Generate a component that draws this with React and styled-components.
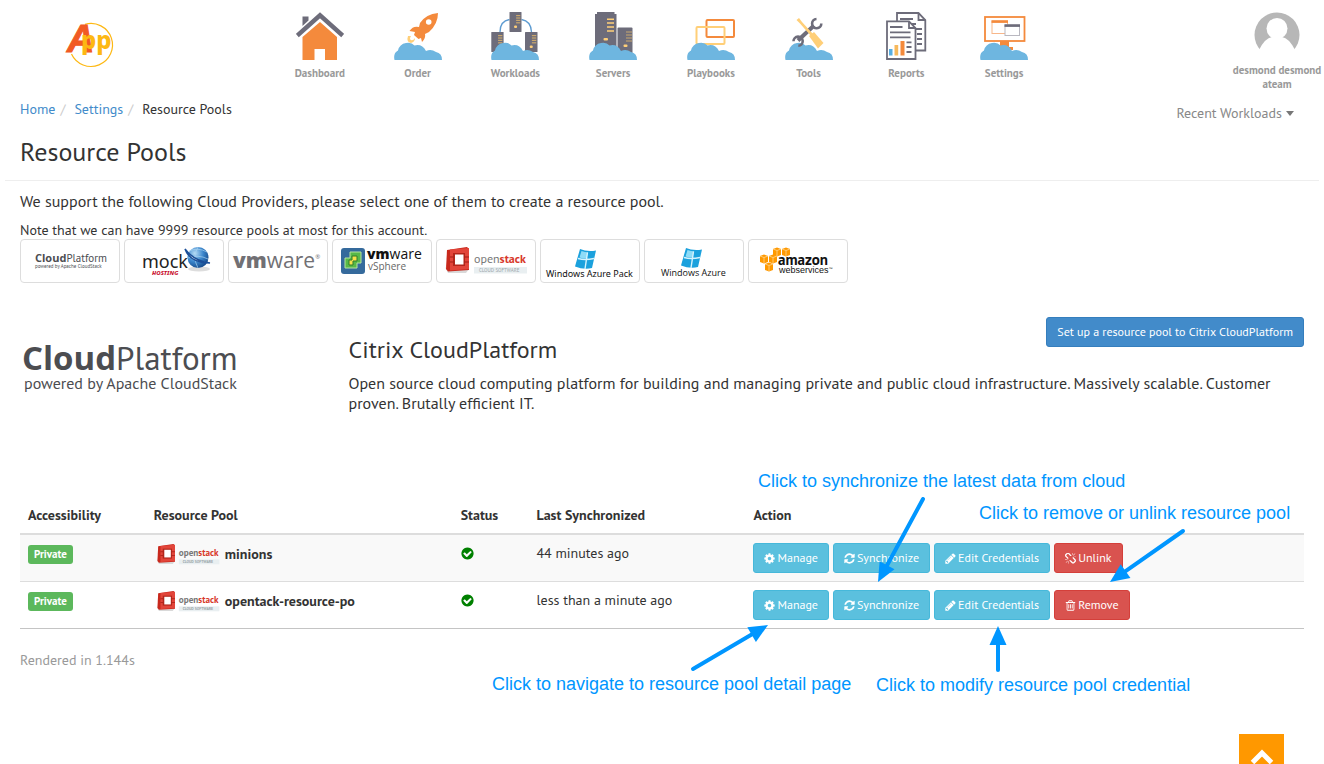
import React from "react";
import styled, { createGlobalStyle } from "styled-components";

const GlobalStyle = createGlobalStyle`
  * {
    box-sizing: border-box;
  }
  body {
    margin: 0;
    background: #ffffff;
    color: #333333;
    font-family: "PT Sans", "Noto Sans", sans-serif;
    font-size: 14px;
    line-height: 20px;
  }
`;

const GREY = "#6d6c7a";
const ORANGE = "#f48a3c";
const YELLOW = "#ffcf78";
const BLUE = "#6eb6e0";

const ICONS = {
  cog: "M1152 896q0-106-75-181t-181-75-181 75-75 181 75 181 181 75 181-75 75-181zm512-109v222q0 12-8 23t-20 13l-185 28q-19 54-39 91 35 50 107 138 10 12 10 25t-9 23q-27 37-99 108t-94 71q-12 0-26-9l-138-108q-44 23-91 38-16 136-29 186-7 28-36 28h-222q-14 0-24.5-8.5t-11.5-21.5l-28-184q-49-16-90-37l-141 107q-10 9-25 9-14 0-25-11-126-114-165-168-7-10-7-23 0-12 8-23 15-21 51-66.5t54-70.5q-27-50-41-99l-183-27q-13-2-21-12.5t-8-23.5v-222q0-12 8-23t19-13l186-28q14-46 39-92-40-57-107-138-10-12-10-24 0-10 9-23 26-36 98.5-107.5t94.5-71.5q13 0 26 10l138 107q44-23 91-38 16-136 29-186 7-28 36-28h222q14 0 24.5 8.5t11.5 21.5l28 184q49 16 90 37l142-107q9-9 24-9 13 0 25 10 129 119 165 170 7 8 7 22 0 12-8 23-15 21-51 66.5t-54 70.5q26 50 41 98l183 28q13 2 21 12.5t8 23.5z",
  refresh: "M1639 1056q0 5-1 7-64 268-268 434.5t-478 166.5q-146 0-282.5-55t-243.5-157l-129 129q-19 19-45 19t-45-19-19-45v-448q0-26 19-45t45-19h448q26 0 45 19t19 45-19 45l-137 137q71 66 161 102t187 36q134 0 250-65t186-179q11-17 53-117 8-23 30-23h192q13 0 22.5 9.5t9.5 22.5zm25-800v448q0 26-19 45t-45 19h-448q-26 0-45-19t-19-45 19-45l138-138q-148-137-349-137-134 0-250 65t-186 179q-11 17-53 117-8 23-30 23h-199q-13 0-22.5-9.5t-9.5-22.5v-7q65-268 270-434.5t480-166.5q146 0 284 55.5t245 156.5l130-129q19-19 45-19t45 19 19 45z",
  pencil: "M491 1536l91-91-235-235-91 91v107h128v128h107zm523-928q0-22-22-22-10 0-17 7l-542 542q-7 7-7 17 0 22 22 22 10 0 17-7l542-542q7-7 7-17zm-54-192l416 416-832 832h-416v-416zm683 96q0 53-37 90l-166 166-416-416 166-165q36-38 90-38 53 0 91 38l235 234q37 39 37 91z",
  trash: "M704 736v576q0 14-9 23t-23 9h-64q-14 0-23-9t-9-23v-576q0-14 9-23t23-9h64q14 0 23 9t9 23zm256 0v576q0 14-9 23t-23 9h-64q-14 0-23-9t-9-23v-576q0-14 9-23t23-9h64q14 0 23 9t9 23zm256 0v576q0 14-9 23t-23 9h-64q-14 0-23-9t-9-23v-576q0-14 9-23t23-9h64q14 0 23 9t9 23zm128 724v-948h-896v948q0 22 7 40.5t14.5 27 10.5 8.5h832q3 0 10.5-8.5t14.5-27 7-40.5zm-672-1076h448l-48-117q-7-9-17-11h-317q-10 2-17 11zm928 32v64q0 14-9 23t-23 9h-96v948q0 83-47 143.5t-113 60.5h-832q-66 0-113-58.5t-47-141.5v-952h-96q-14 0-23-9t-9-23v-64q0-14 9-23t23-9h309l70-167q15-37 54-63t79-26h320q40 0 79 26t54 63l70 167h309q14 0 23 9t9 23z",
  unlink: "M503 1271l-256 256q-10 9-23 9-12 0-23-9-9-10-9-23t9-23l256-256q10-9 23-9t23 9q9 10 9 23t-9 23zm169 41v320q0 14-9 23t-23 9-23-9-9-23v-320q0-14 9-23t23-9 23 9 9 23zm-224-224q0 14-9 23t-23 9h-320q-14 0-23-9t-9-23 9-23 23-9h320q14 0 23 9t9 23zm1264 128q0 120-85 203l-147 146q-83 83-203 83-121 0-204-85l-334-335q-21-21-42-56l239-18 273 274q28 28 68 27.5t68-27.5l147-146q28-28 28-67 0-40-28-68l-274-275 18-239q35 21 56 42l336 336q84 86 84 204zm-617-724l-239 18-273-274q-28-28-68-28-39 0-68 27l-147 146q-28 28-28 67 0 40 28 68l274 274-18 240q-35-21-56-42l-336-336q-84-86-84-204 0-120 85-203l147-146q83-83 203-83 121 0 204 85l334 335q21 21 42 56zm633 84q0 14-9 23t-23 9h-320q-14 0-23-9t-9-23 9-23 23-9h320q14 0 23 9t9 23zm-544-544v320q0 14-9 23t-23 9-23-9-9-23v-320q0-14 9-23t23-9 23 9 9 23zm407 151l-256 256q-11 9-23 9t-23-9q-9-10-9-23t9-23l256-256q10-9 23-9t23 9q9 10 9 23t-9 23z",
  check: "M1412 734q0-28-18-46l-91-90q-19-19-45-19t-45 19l-408 407-226-226q-19-19-45-19t-45 19l-91 90q-18 18-18 46 0 27 18 45l362 362q19 19 45 19 27 0 46-19l543-543q18-18 18-45zm252 162q0 209-103 385.5t-279.5 279.5-385.5 103-385.5-103-279.5-279.5-103-385.5 103-385.5 279.5-279.5 385.5-103 385.5 103 279.5 279.5 103 385.5z",
};

const Icon = ({ name, size = 11 }) => (
  <svg width={size} height={size} viewBox="80 80 1632 1632" fill="currentColor" aria-hidden="true">
    <path d={ICONS[name]} />
  </svg>
);

/* ---------- header drawings ---------- */

const Cloud = () => (
  <path d="M0.5 48Q-1 41 4 38.500Q5.500 32 12 31Q17.500 30 20.500 33.500Q28 31.500 32 39Q37 36.500 42 40Q48 41 48 48Z" fill={BLUE} />
);

const Server = ({ x, y, w, h, dots = true }) => (
  <g>
    <rect x={x} y={y} width={w} height={h} rx="0.5" fill={GREY} />
    {[0.15, 0.27, 0.39, 0.51].map((p) => (
      <rect key={p} x={x + w * 0.55} y={y + h * p} width={w * 0.35} height="1.2" fill="#c9a76e" />
    ))}
    {dots && <rect x={x + w * 0.38} y={y + h * 0.68} width="3" height="2.4" rx="1" fill={YELLOW} />}
  </g>
);

const DRAWINGS = {
  Dashboard: (
    <>
      <path d="M6.500 4.500h6v4l-6 5.500z" fill={GREY} />
      <path d="M1.300 23.500L24 3.300L46.700 23.500" fill="none" stroke={GREY} strokeWidth="4.400" />
      <path d="M24 10L41 25V48H29V37H18.500V48H6.500V25Z" fill={ORANGE} />
    </>
  ),
  Order: (
    <>
      <path d="M14 24Q12 30 17 31Q21 30 21 26Q19 29 17 28Q15 27 17 24Z" fill={YELLOW} />
      <path d="M44 1Q32 2 26 11L25 15Q19 13.500 15.500 19L21 20L20 23L24.500 27L27 26L28 30Q32 26 31 22L35 20Q44 12 44 1Z" fill={ORANGE} />
      <circle cx="34.700" cy="10" r="2.800" fill="#fff" />
      <Cloud />
    </>
  ),
  Workloads: (
    <>
      <path d="M9 20Q9 9 18.500 7.500M30.500 7.500Q40 9 40.500 20" fill="none" stroke="#5d9bd1" strokeWidth="1.300" />
      <Server x={18.5} y={0} w={12} h={20} />
      <Server x={0.3} y={20} w={12.3} h={20} dots={false} />
      <Server x={34} y={20} w={12.5} h={20} />
      <Cloud />
    </>
  ),
  Servers: (
    <>
      <path d="M8 0H25.500V2H27.500V44H6V2H8Z" fill={GREY} />
      <path d="M18 7.300h7M18 11h7M18 15h7M18 19h7" stroke={YELLOW} strokeWidth="1.600" />
      <rect x="14.500" y="26" width="4.500" height="2.600" rx="1" fill={YELLOW} />
      <rect x="28.500" y="15.500" width="15" height="26" rx="1" fill={GREY} />
      <path d="M37 20h6M37 23h6M37 26h6M37 29h6" stroke="#c9a76e" strokeWidth="1.200" />
      <rect x="34.500" y="32.500" width="4" height="2.400" rx="1" fill={YELLOW} />
      <Cloud />
    </>
  ),
  Playbooks: (
    <>
      <rect x="19.500" y="8" width="27.500" height="17" rx="1" fill="none" stroke={ORANGE} strokeWidth="2" />
      <rect x="9.500" y="15" width="28" height="17" rx="1" fill="none" stroke={YELLOW} strokeWidth="2" />
      <Cloud />
    </>
  ),
  Tools: (
    <>
      <Cloud />
      <path d="M13 28.500L29 13.500" stroke={GREY} strokeWidth="4" />
      <path d="M31.500 7A4.600 4.600 0 1 0 36.300 11.500" fill="none" stroke={GREY} strokeWidth="2.600" />
      <path d="M8.500 29.300A4.600 4.600 0 1 1 13.300 33.800" fill="none" stroke={GREY} strokeWidth="2.600" />
      <path d="M11.500 8L14 6L17 10L28 22L26 24L15 11.500Z" fill={YELLOW} />
      <path d="M24 24L29 20L38.500 31L33 36.500Z" fill={YELLOW} />
    </>
  ),
  Reports: (
    <>
      <path d="M15 1H36.500L43.300 8V38.500H15Z" fill="#fff" stroke={GREY} strokeWidth="1.800" />
      <path d="M36.500 1V8H43.300M18 7h13M18 12h16M32 17h8M35 22h5M35 27h5M35 32h5" fill="none" stroke={GREY} strokeWidth="1.800" />
      <path d="M5 9.300H27L33.500 16V47H5Z" fill="#fff" stroke={GREY} strokeWidth="1.800" />
      <path d="M27 9.300V16H33.500M8 15h12.500M8 20.300h20.500M8 25.300h20.500M24.500 30.300h5M24.500 35h5M24.500 40h5" fill="none" stroke={GREY} strokeWidth="1.800" />
      <rect x="7" y="37" width="3.500" height="6.500" fill="#58aee0" />
      <rect x="12.500" y="33" width="3.700" height="10.500" fill="#f7b95c" />
      <rect x="18.500" y="29" width="4" height="14.500" fill={ORANGE} />
    </>
  ),
  Settings: (
    <>
      <rect x="5" y="5" width="39.500" height="24" fill="#fff" stroke={ORANGE} strokeWidth="1.800" />
      <path d="M20 29h9v6h4v3H20z" fill={ORANGE} />
      <rect x="12" y="9" width="15.500" height="12.500" fill="#fff" stroke="#f8b78a" />
      <rect x="11.500" y="8.300" width="16.500" height="2.600" fill={ORANGE} />
      <rect x="25" y="13" width="14.500" height="10.500" fill="#fff" stroke="#b9b8c0" />
      <rect x="24.500" y="12.300" width="15.500" height="2.600" fill={GREY} />
      <Cloud />
    </>
  ),
};

const AppLogo = () => (
  <svg width="56" height="54" viewBox="62 17 56 54" role="img" aria-label="App">
    <path d="M85 24.300A21.500 21.500 0 1 1 71.500 54" fill="none" stroke="#fdb813" strokeWidth="1.200" />
    <g fontWeight="800">
      <text x="67" y="52" fontFamily="Liberation Sans, sans-serif" fontSize="38" fontStyle="italic" fill="#f15a24" stroke="#f15a24">A</text>
      <text x="81" y="49" fontFamily="Noto Sans, sans-serif" fontSize="24" fill="#fdb813">pp</text>
    </g>
  </svg>
);

const Avatar = () => (
  <svg width="46" height="46" viewBox="0 0 46 46" role="img" aria-label="User">
    <circle cx="23" cy="23" r="22.500" fill="#b7b7b7" />
    <circle cx="23" cy="16.500" r="10.500" fill="#fff" />
    <path d="M5 38Q11 26 18 25H28Q35 26 41 38L36 46H10Z" fill="#fff" />
  </svg>
);

/* ---------- provider logos ---------- */

const OpenstackArt = () => (
  <g>
    <path d="M9 28L13 32L33 30L30 34H12Z" fill="#d9d9d9" />
    <path d="M11 11L31 8L33 10V31L12 32.500L10 30Z" fill="#c8281c" />
    <path d="M14 10.500L33 9V30L14 31.500Z" fill="#e2453a" />
    <path d="M17 14H29V27H17Z" fill="#b3261b" />
    <path d="M19 15.500H27.500V25.500H19Z" fill="#fff" />
    <path d="M14 18h3.500M14 23h3.500M28.500 18H33M28.500 23H33" stroke="#a31f16" />
    <rect x="38" y="28" width="53" height="6.500" fill="#e9eff1" />
    <g fontFamily="PT Sans, Noto Sans, sans-serif">
      <text x="38" y="24" fontSize="12" fill="#777">open<tspan fill="#d8392b" fontWeight="700">stack</tspan></text>
      <text x="43" y="33" fontSize="5" fill="#9aa5a9">CLOUD SOFTWARE</text>
    </g>
  </g>
);

const AzureFlag = ({ x, y }) => (
  <g transform={`translate(${x} ${y})`}>
    <path d="M5 0Q12 3 21 1.500L17 19Q9 21 0 17.500Z" fill="#1ba1dd" />
    <path d="M6.500 2Q11 3.500 13 3.300L11.500 9.500Q8 9.800 4.500 8.500Z" fill="#8fdcf7" />
    <path d="M12.500 3.500L10 20M3 9.500Q10 11.500 19 9.500" fill="none" stroke="#d5f3fd" strokeWidth="1.400" />
  </g>
);

const AwsCube = ({ x, y }) => (
  <g transform={`translate(${x} ${y})`}>
    <path d="M-4 -3L0 -4.500L4 -3V3L0 4.500L-4 3Z" fill="#f90" />
    <path d="M-4 -3L0 -1.500L4 -3M0 -1.500V4.500" fill="none" stroke="#ffd591" strokeWidth="0.800" />
  </g>
);

const PROVIDERS = [
  {
    name: "Citrix CloudPlatform",
    art: (
      <g fontFamily="PT Sans, Noto Sans, sans-serif" fill="#4c4d51">
        <text x="15" y="23" fontSize="11"><tspan fontFamily="Open Sans, sans-serif" fontWeight="700">Cloud</tspan>Platform</text>
        <text x="15" y="29" fontSize="5">powered by Apache CloudStack</text>
      </g>
    ),
  },
  {
    name: "Mock hosting",
    art: (
      <g fontFamily="Noto Sans, sans-serif">
        <defs>
          <radialGradient id="globe" cx="0.35" cy="0.3" r="0.8">
            <stop offset="0" stopColor="#b6dcf6" />
            <stop offset="0.5" stopColor="#3b86cc" />
            <stop offset="1" stopColor="#10407f" />
          </radialGradient>
        </defs>
        <ellipse cx="75" cy="30" rx="11" ry="2.500" fill="#ddd" />
        <circle cx="74" cy="18.500" r="10.500" fill="url(#globe)" />
        <path d="M65 12Q74 8 83 13M64 19Q74 15 84 20M74 8Q68 18 74 29" fill="none" stroke="#a8d2f0" strokeWidth="0.700" />
        <path d="M61 10Q66 24 86 24Q70 22 61 10Z" fill="#fff" stroke="#1c4f98" strokeWidth="1.500" />
        <text x="18" y="29" fontSize="18" fill="#222">mock</text>
        <text x="28" y="36" fontSize="6" fontWeight="800" fontStyle="italic" fill="#c8102e">HOSTING</text>
      </g>
    ),
  },
  {
    name: "VMware",
    art: (
      <text x="5" y="29" fontFamily="Open Sans, sans-serif" fontSize="21" fill="#717074">
        <tspan fontWeight="800">vm</tspan>ware<tspan fontSize="6" dy="-9">®</tspan>
      </text>
    ),
  },
  {
    name: "VMware vSphere",
    art: (
      <g fontFamily="Open Sans, sans-serif">
        <rect x="9" y="9" width="24" height="26" rx="3" fill="#356a9c" />
        <path d="M18 13H29V24H25V29H13V19H18Z" fill="#58b947" stroke="#b6e3a0" />
        <path d="M20 17H25V22H21V26H17V21H20Z" fill="#f7e04a" stroke="#2f7d2c" />
        <text x="35" y="20" fontSize="14" fill="#111"><tspan fontWeight="800">vm</tspan>ware</text>
        <text x="36" y="31" fontSize="10" fill="#666">vSphere</text>
      </g>
    ),
  },
  { name: "OpenStack", art: <OpenstackArt /> },
  {
    name: "Windows Azure Pack",
    art: (
      <g>
        <AzureFlag x={35} y={10} />
        <text x="6" y="38" fontFamily="Noto Sans, sans-serif" fontSize="9" fill="#111">Windows Azure Pack</text>
      </g>
    ),
  },
  {
    name: "Windows Azure",
    art: (
      <g>
        <AzureFlag x={37} y={9} />
        <text x="17" y="37" fontFamily="Open Sans, sans-serif" fontSize="9" fontWeight="500" fill="#111">Windows Azure</text>
      </g>
    ),
  },
  {
    name: "Amazon Web Services",
    art: (
      <g fill="#111">
        <AwsCube x={29} y={13} />
        <AwsCube x={38} y={13} />
        <AwsCube x={16} y={20} />
        <AwsCube x={25} y={20} />
        <AwsCube x={21} y={28} />
        <text x="30" y="26" fontFamily="PT Sans, Noto Sans, sans-serif" fontSize="15" fontWeight="700">amazon</text>
        <text x="31" y="34" fontFamily="Liberation Sans, sans-serif" fontSize="9">webservices<tspan fontSize="4" dy="-3">™</tspan></text>
      </g>
    ),
  },
];

const NAV = ["Dashboard", "Order", "Workloads", "Servers", "Playbooks", "Tools", "Reports", "Settings"];

const COLUMNS = [
  { title: "Accessibility", width: "9.8%" },
  { title: "Resource Pool", width: "23.9%" },
  { title: "Status", width: "5.9%" },
  { title: "Last Synchronized", width: "16.9%" },
  { title: "Action", width: "auto" },
];

const POOLS = [
  { name: "minions", synced: "44 minutes ago", danger: "Unlink", icon: "unlink" },
  { name: "opentack-resource-po", synced: "less than a minute ago", danger: "Remove", icon: "trash" },
];

/* x and y are measured from the left top corner of the table */
const NOTES = [
  { text: "Click to synchronize the latest data from cloud", x: 738, y: -26 },
  { text: "Click to remove or unlink resource pool", x: 959, y: 6 },
  { text: "Click to navigate to resource pool detail page", x: 472, y: 177 },
  { text: "Click to modify resource pool credential", x: 856, y: 178 },
];

const ARROWS = [
  { from: [903, 2], to: [858, 85] },
  { from: [1163, 34], to: [1090, 85] },
  { from: [673, 172], to: [748, 128] },
  { from: [978, 173], to: [978, 129] },
];

const Arrow = ({ from, to }) => {
  const angle = (Math.atan2(to[1] - from[1], to[0] - from[0]) * 180) / Math.PI;
  const length = Math.hypot(to[0] - from[0], to[1] - from[1]);
  return (
    <g transform={`translate(${from[0]} ${from[1]}) rotate(${angle})`}>
      <path d={`M0 0H${length - 16}`} stroke="#0096ff" strokeWidth="4" strokeLinecap="round" />
      <path d={`M${length} 0l-19 -8.500v17z`} fill="#0096ff" />
    </g>
  );
};

const App = () => (
  <Page>
    <GlobalStyle />
    <Header>
      <Brand href="#home">
        <AppLogo />
      </Brand>
      <Nav>
        {NAV.map((label) => (
          <NavLink key={label} href={`#${label.toLowerCase()}`}>
            <svg width="48" height="48" viewBox="0 0 48 48" aria-hidden="true">{DRAWINGS[label]}</svg>
            {label}
          </NavLink>
        ))}
      </Nav>
      <User href="#account">
        <Avatar />
        <span>desmond desmond ateam</span>
      </User>
    </Header>
    <SubHeader>
      <Breadcrumb aria-label="Breadcrumb">
        <a href="#home">Home</a>
        <i>/</i>
        <a href="#settings">Settings</a>
        <i>/</i>
        <span>Resource Pools</span>
      </Breadcrumb>
      <Recent type="button">
        Recent Workloads
        <Caret />
      </Recent>
    </SubHeader>
    <Title>Resource Pools</Title>
    <Main>
      <Lead>We support the following Cloud Providers, please select one of them to create a resource pool.</Lead>
      <Note>Note that we can have 9999 resource pools at most for this account.</Note>
      <Providers>
        {PROVIDERS.map(({ name, art }) => (
          <Provider key={name} type="button" aria-label={name}>
            <svg width="98" height="42" viewBox="1 1 98 42" aria-hidden="true">{art}</svg>
          </Provider>
        ))}
      </Providers>
      <Detail>
        <DetailLogo>
          <svg width="240" height="72" viewBox="0 -12 240 72" role="img" aria-label="CloudPlatform">
            <g fill="#4c4d51" fontFamily="PT Sans, Noto Sans, sans-serif">
              <text x="2" y="29" fontSize="33"><tspan fontFamily="Open Sans, sans-serif" fontWeight="700">Cloud</tspan>Platform</text>
              <text x="4" y="48" fontSize="16">powered by Apache CloudStack</text>
            </g>
          </svg>
        </DetailLogo>
        <DetailBody>
          <DetailTop>
            <h3>Citrix CloudPlatform</h3>
            <Button type="button" $kind="primary">Set up a resource pool to Citrix CloudPlatform</Button>
          </DetailTop>
          <p>
            Open source cloud computing platform for building and managing private and public cloud
            infrastructure. Massively scalable. Customer proven. Brutally efficient IT.
          </p>
        </DetailBody>
      </Detail>
      <TableArea>
        <Table>
          <thead>
            <tr>
              {COLUMNS.map((c) => <Th key={c.title} $width={c.width}>{c.title}</Th>)}
            </tr>
          </thead>
          <tbody>
            {POOLS.map((pool) => (
              <Row key={pool.name}>
                <td><Badge>Private</Badge></td>
                <td>
                  <PoolName>
                    <svg width="68" height="26" viewBox="6 4 88 34" role="img" aria-label="OpenStack"><OpenstackArt /></svg>
                    {pool.name}
                  </PoolName>
                </td>
                <td><Status><Icon name="check" size={13} /></Status></td>
                <td>{pool.synced}</td>
                <td>
                  <Actions>
                    <Button type="button" $kind="info"><Icon name="cog" />Manage</Button>
                    <Button type="button" $kind="info"><Icon name="refresh" />Synchronize</Button>
                    <Button type="button" $kind="info"><Icon name="pencil" />Edit Credentials</Button>
                    <Button type="button" $kind="danger"><Icon name={pool.icon} />{pool.danger}</Button>
                  </Actions>
                </td>
              </Row>
            ))}
          </tbody>
        </Table>
        <Overlay>
          <svg width="1284" height="200" viewBox="0 0 1284 200" aria-hidden="true">
            {ARROWS.map((arrow) => <Arrow key={arrow.to[0]} {...arrow} />)}
          </svg>
          {NOTES.map((note) => (
            <Callout key={note.text} style={{ left: note.x, top: note.y }}>{note.text}</Callout>
          ))}
        </Overlay>
      </TableArea>
      <Footer>Rendered in 1.144s</Footer>
    </Main>
    <BackToTop type="button" aria-label="Back to top">
      <svg width="24" height="16" viewBox="0 0 24 16" aria-hidden="true">
        <path d="M2.500 14.500L12 5L21.500 14.500" fill="none" stroke="#fff" strokeWidth="5" />
      </svg>
    </BackToTop>
  </Page>
);

const Page = styled.div`
  min-height: 100vh;
`;

const Header = styled.header`
  display: grid;
  grid-template-columns: 1fr minmax(0, 782px) 1fr;
  height: 96px;
`;

const Brand = styled.a`
  justify-self: start;
  padding: 17px 0 0 62px;
`;

const Nav = styled.nav`
  display: grid;
  grid-template-columns: repeat(8, 1fr);
  padding-top: 12px;
`;

const NavLink = styled.a`
  display: flex;
  flex-direction: column;
  align-items: center;
  gap: 6px;
  color: #999999;
  font-size: 11px;
  font-weight: 700;
  line-height: 14px;
  text-decoration: none;
`;

const User = styled.a`
  justify-self: end;
  display: flex;
  flex-direction: column;
  align-items: center;
  gap: 5px;
  width: 94px;
  padding-top: 12px;
  color: #999999;
  font-size: 11px;
  font-weight: 700;
  line-height: 14px;
  text-align: center;
  text-decoration: none;
`;

const SubHeader = styled.div`
  display: flex;
  justify-content: space-between;
  align-items: flex-start;
  padding: 3px 30px 0 20px;
`;

const Breadcrumb = styled.nav`
  display: flex;

  & a {
    color: #428bca;
    text-decoration: none;
  }
  & i {
    padding: 0 9px 0 5px;
    color: #cccccc;
    font-style: normal;
  }
`;

const Recent = styled.button`
  display: flex;
  align-items: center;
  gap: 4px;
  margin-top: 4px;
  padding: 0;
  border: 0;
  background: none;
  color: #888888;
  font: inherit;
`;

const Caret = styled.span`
  border: 4px solid transparent;
  border-top: 5px solid #777777;
  border-bottom: 0;
`;

const Title = styled.h1`
  margin: 16px 5px 0;
  padding: 0 15px 15px;
  border-bottom: 1px solid #eeeeee;
  font-size: 26px;
  font-weight: 400;
  line-height: 26px;
`;

const Main = styled.main`
  padding: 10px 20px 0;
`;

const Lead = styled.p`
  margin: 0 0 10px;
  font-size: 16px;
`;

const Note = styled.p`
  margin: 0;
  line-height: 18px;
`;

const Providers = styled.div`
  display: flex;
  flex-wrap: wrap;
  gap: 4px;
`;

const Provider = styled.button`
  width: 100px;
  height: 44px;
  padding: 0;
  border: 1px solid #dddddd;
  border-radius: 4px;
  background: #ffffff;

  & svg {
    display: block;
  }
`;

const Detail = styled.section`
  display: grid;
  grid-template-columns: repeat(4, minmax(0, 1fr));
  column-gap: 30px;
  margin-top: 34px;
`;

const DetailLogo = styled.div`
  padding-top: 12px;
`;

const DetailBody = styled.div`
  grid-column: span 3;

  & p {
    margin: 11px 0 0;
    font-size: 16px;
  }
`;

const DetailTop = styled.div`
  display: flex;
  justify-content: space-between;
  align-items: flex-start;

  & h3 {
    margin: 20px 0 0;
    font-size: 24px;
    font-weight: 400;
    line-height: 25px;
  }
`;

const KINDS = {
  primary: { background: "#428bca", border: "#357ebd" },
  info: { background: "#5bc0de", border: "#46b8da" },
  danger: { background: "#d9534f", border: "#d43f3a" },
};

const Button = styled.button`
  display: flex;
  align-items: center;
  gap: 2px;
  height: 30px;
  padding: 0 10px;
  border: 1px solid ${({ $kind }) => KINDS[$kind].border};
  border-radius: 3px;
  background: ${({ $kind }) => KINDS[$kind].background};
  color: #ffffff;
  font-family: inherit;
  font-size: 12px;
  line-height: 18px;
  white-space: nowrap;
`;

const TableArea = styled.div`
  position: relative;
  margin-top: 84px;
`;

const Table = styled.table`
  width: 100%;
  border-spacing: 0;
  table-layout: fixed;
`;

const Th = styled.th`
  width: ${({ $width }) => $width};
  padding: 8px;
  border-bottom: 2px solid #dddddd;
  text-align: left;
`;

const Row = styled.tr`
  &:nth-child(odd) {
    background: #f9f9f9;
  }
  & td {
    height: 47px;
    padding: 8px;
    border-bottom: 1px solid #dddddd;
    vertical-align: top;
  }
  &:last-child td {
    border-bottom-color: #c4c4c4;
  }
`;

const Badge = styled.span`
  display: inline-block;
  margin-top: 2px;
  padding: 0 6px;
  border-radius: 3px;
  background: #5cb85c;
  color: #ffffff;
  font-size: 11px;
  font-weight: 700;
  line-height: 19px;
`;

const PoolName = styled.div`
  display: flex;
  align-items: center;
  gap: 3px;
  height: 22px;
  font-weight: 700;
`;

const Status = styled.span`
  display: flex;
  align-items: center;
  height: 20px;
  color: #008000;
`;

const Actions = styled.div`
  display: flex;
  gap: 4px;
`;

const Overlay = styled.div`
  position: absolute;
  top: 0;
  left: 0;
  pointer-events: none;
`;

const Callout = styled.span`
  position: absolute;
  color: #0096ff;
  font-family: "Liberation Sans", Arial, sans-serif;
  font-size: 18px;
  line-height: 20px;
  white-space: nowrap;
`;

const Footer = styled.footer`
  margin-top: 21px;
  color: #999999;
`;

const BackToTop = styled.button`
  position: fixed;
  right: 40px;
  bottom: 0;
  display: flex;
  justify-content: center;
  align-items: flex-end;
  width: 45px;
  height: 30px;
  padding: 0;
  border: 0;
  background: #ff9800;
`;

export default App;
